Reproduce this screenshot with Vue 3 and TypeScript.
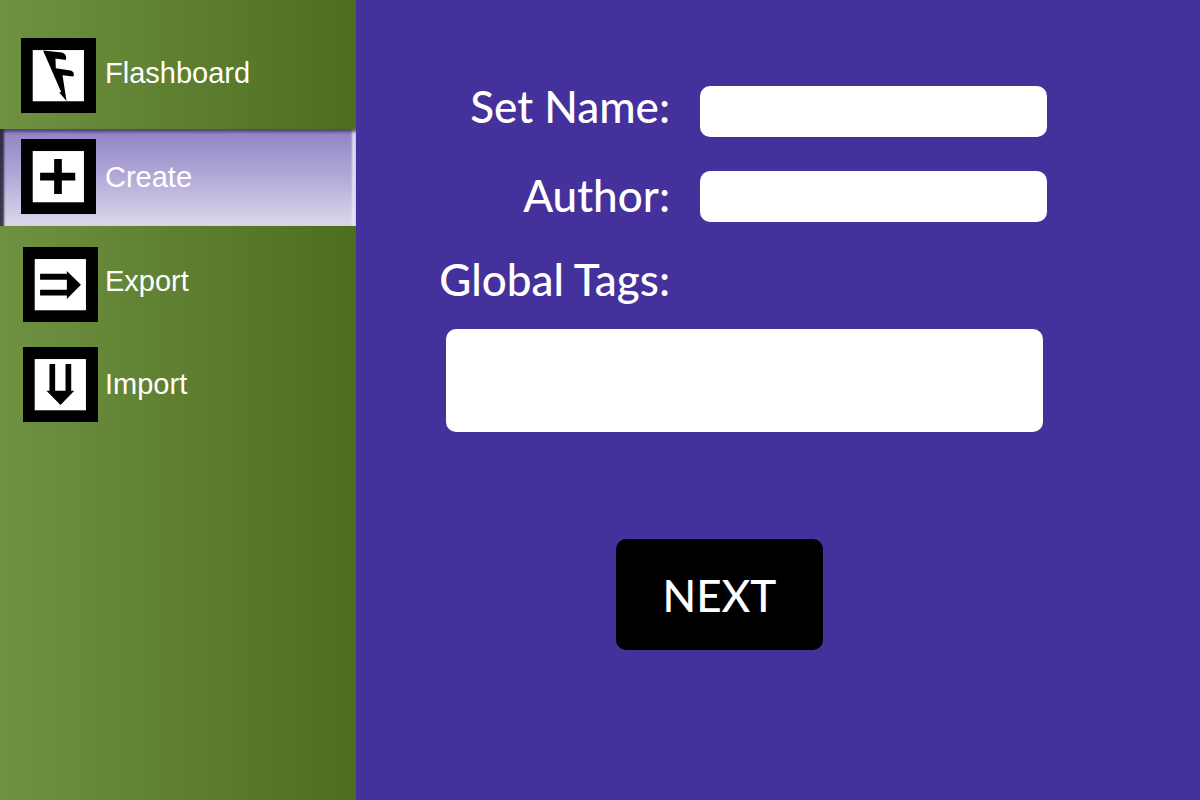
<script setup lang="ts">
import { ref } from 'vue'

interface NavItem {
  id: string
  label: string
  path: string
}

const items: NavItem[] = [
  {
    id: 'flashboard',
    label: 'Flashboard',
    path: 'M66 37L122 43Q134 46 135 58L134 66L103 61L104 90L148 97Q159 101 158 111L156 115L124 111L136 188L114 163L120 161L116 152Z',
  },
  { id: 'create', label: 'Create', path: 'M99 60H122V101H162V124H122V164H99V124H57V101H99Z' },
  {
    id: 'export',
    label: 'Export',
    path: 'M51 80H131V72L173 113L131 155V145H51V128H131V98H51Z',
  },
  {
    id: 'import',
    label: 'Import',
    path: 'M79 51H96V131H127V51H144V131H153L112 173L70 131H79Z',
  },
]

const active = ref('create')
const setName = ref('')
const author = ref('')
const tags = ref('')
</script>

<template>
  <div class="app">
    <nav class="sidebar">
      <a
        v-for="item in items"
        :key="item.id"
        :href="'#' + item.id"
        class="nav-item"
        :class="[item.id, { active: active === item.id }]"
        @click.prevent="active = item.id"
      >
        <svg class="icon" viewBox="0 0 224 224" aria-hidden="true">
          <rect width="224" height="224" />
          <rect x="35" y="36" width="153" height="153" fill="#fff" />
          <path :d="item.path" />
        </svg>
        <span class="nav-label">{{ item.label }}</span>
      </a>
    </nav>
    <main class="main">
      <form class="form" @submit.prevent>
        <label for="set-name">Set Name:</label>
        <input id="set-name" v-model="setName" type="text" />
        <label for="author" class="author-label">Author:</label>
        <input id="author" v-model="author" type="text" />
        <label for="tags">Global Tags:</label>
        <textarea id="tags" v-model="tags"></textarea>
        <button type="submit">NEXT</button>
      </form>
    </main>
  </div>
</template>

<style>
body {
  margin: 0;
}
</style>

<style scoped>
.app {
  display: flex;
  min-height: 100vh;
}

.sidebar {
  box-sizing: border-box;
  flex: 0 0 356px;
  padding-top: 28px;
  background: linear-gradient(90deg, #6f9142, #4d6e1e);
}

.nav-item {
  display: flex;
  align-items: flex-start;
  gap: 9px;
  padding: 10px 20px 16px 21px;
  color: #fff;
  font: 29px/33px "Liberation Sans", Arial, sans-serif;
  text-decoration: none;
}

.icon {
  flex: none;
  width: 75px;
  height: 75px;
}

.nav-label {
  margin-top: 19px;
}

.create {
  padding-bottom: 12px;
}

.create .nav-label {
  margin-top: 22px;
}

.active {
  background: linear-gradient(#8f82c3, #b3aad7 50%, #dcd8ec);
  box-shadow:
    inset 0 4px 3px -1px rgb(50 35 80 / 65%),
    inset 5px 0 2px -1px rgb(35 30 50 / 85%),
    inset -5px 0 2px -1px rgb(235 230 248 / 85%);
}

.export {
  gap: 7px;
  padding: 21px 20px 12px 23px;
}

.import {
  gap: 7px;
  padding: 13px 20px 12px 23px;
}

.export .nav-label {
  margin-top: 18px;
}

.import .nav-label {
  margin-top: 21px;
}

.main {
  flex: 1;
  padding: 86px 153px 40px 76px;
  background: #45319b;
}

.form {
  display: grid;
  grid-template-columns: 238px 1fr;
  column-gap: 30px;
}

label {
  justify-self: end;
  color: #fff;
  font: 44px/40px Lato, sans-serif;
  font-weight: 500;
  white-space: nowrap;
}

.author-label {
  padding-top: 4px;
}

input,
textarea {
  box-sizing: border-box;
  min-width: 0;
  border: 0;
  border-radius: 10px;
  background: #fff;
  color: #222;
  font: 28px/34px Lato, sans-serif;
}

input {
  height: 51px;
  margin-bottom: 34px;
  padding: 0 14px;
}

label[for="tags"] {
  padding-top: 3px;
}

textarea {
  grid-column: 1 / -1;
  height: 103px;
  margin: 30px 4px 0 14px;
  padding: 12px 14px;
  resize: none;
}

button {
  grid-column: 1 / -1;
  justify-self: center;
  width: 207px;
  height: 111px;
  margin: 107px 40px 0 0;
  padding: 0;
  border: 0;
  border-radius: 10px;
  background: #000;
  color: #fff;
  font: 44px/52px Lato, sans-serif;
  font-weight: 500;
}
</style>
